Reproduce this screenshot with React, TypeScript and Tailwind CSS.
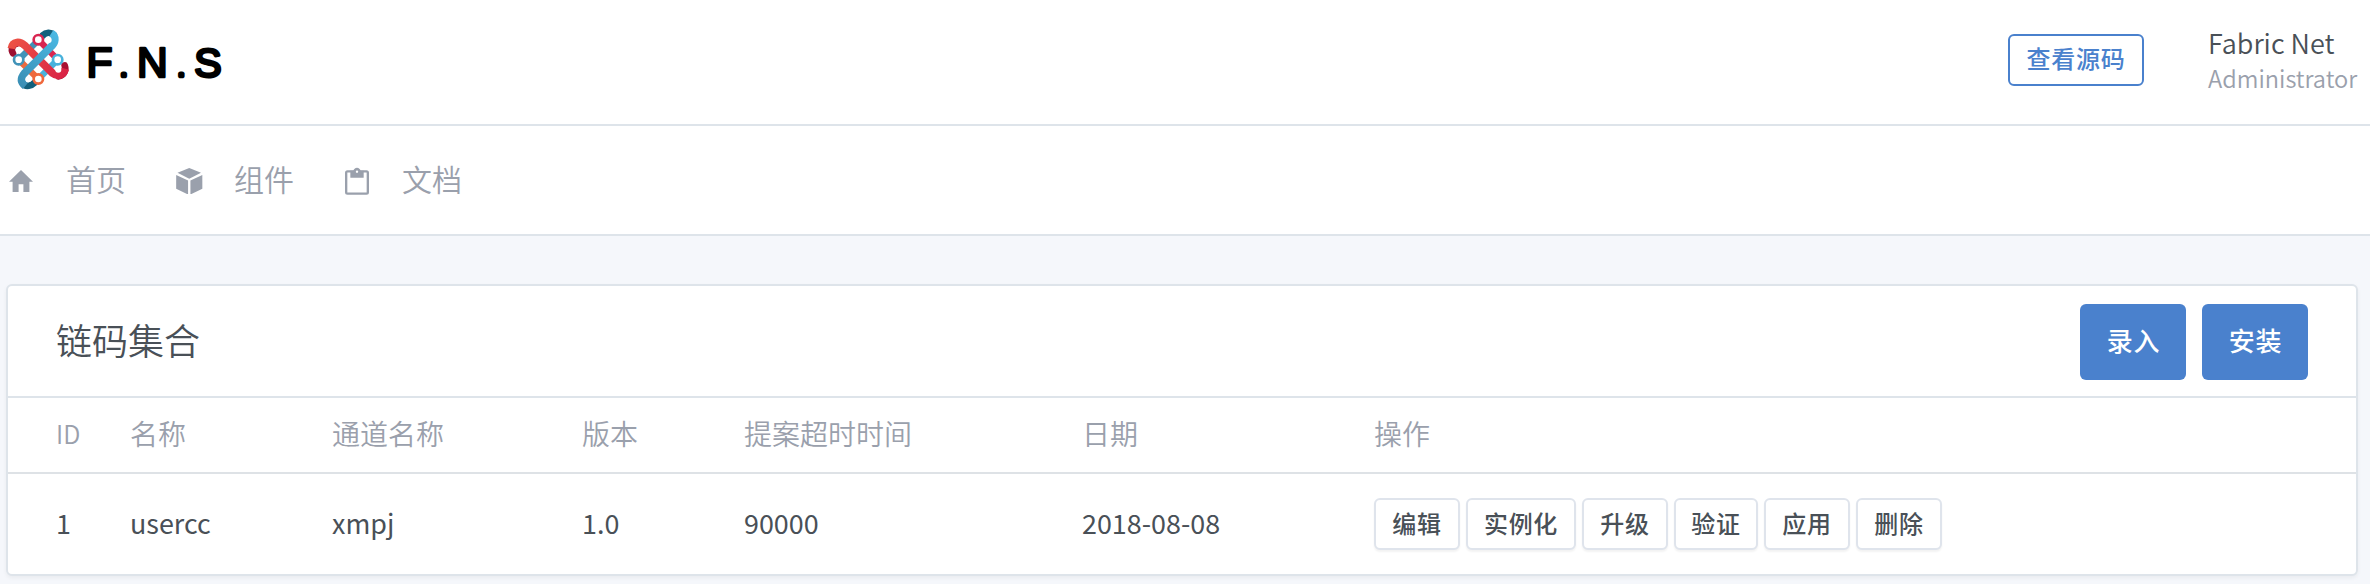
import React from "react";

function Logo() {
  return (
    <svg width="232" height="76" viewBox="0 0 232 76" className="block">
      <defs>
        <linearGradient id="blue" gradientUnits="userSpaceOnUse" x1="55" y1="180" x2="150" y2="20">
          <stop offset="0" stopColor="#3a8fb5" />
          <stop offset="1" stopColor="#4ab8e3" />
        </linearGradient>
        <linearGradient id="red" gradientUnits="userSpaceOnUse" x1="25" y1="50" x2="185" y2="150">
          <stop offset="0" stopColor="#ec5045" />
          <stop offset="1" stopColor="#d92245" />
        </linearGradient>
      </defs>
      <g transform="translate(4 3) scale(0.3333)">
        <g fill="none" strokeWidth="19" strokeLinecap="round">
          <path d="M44 101 L118 28" stroke="#4193b8" />
          <path d="M103 41 L161 101" stroke="#d92550" />
          <path d="M44 101 L103 159" stroke="#ee6a3e" />
          <path d="M103 159 L161 101" stroke="#49b2dc" />
        </g>
        <g fill="none" strokeWidth="20" strokeLinecap="round">
          <path d="M27 82 C20 70 24 58 40 52" stroke="#9c1030" />
          <path d="M182 118 C187 132 182 146 164 151" stroke="#a81032" />
          <path d="M116 28 C126 18 140 18 149 26" stroke="#12607c" />
          <path d="M58 174 C66 184 82 180 92 170" stroke="#12607c" />
        </g>
        <g fill="none" strokeWidth="23">
          <path d="M22 68 C26 44 48 46 62 58 L146 142 C160 153 178 150 184 128" stroke="url(#red)" />
          <path d="M142 22 C158 32 154 50 142 61 L61 142 C48 158 52 170 64 180" stroke="url(#blue)" />
        </g>
        <g fill="#fff" strokeWidth="8">
          <circle cx="103" cy="41" r="14" stroke="#d92550" />
          <circle cx="44" cy="101" r="14" stroke="#4193b8" />
          <circle cx="161" cy="101" r="14" stroke="#49b2dc" />
          <circle cx="103" cy="159" r="14" stroke="#f0683c" />
        </g>
        <g fill="#fff">
          <circle cx="44" cy="71" r="9" />
          <circle cx="134" cy="42" r="9" />
          <circle cx="163" cy="131" r="9" />
          <circle cx="73" cy="160" r="9" />
        </g>
      </g>
      <g fill="#000" stroke="#000" strokeLinejoin="round" className="font-['Liberation_Sans',sans-serif]">
        <text y="54.200" x="86.400" fontSize="42.500" strokeWidth="2.700">F</text>
        <text y="53.400" x="120.900" fontSize="20" strokeWidth="4.700">.</text>
        <text y="54.200" x="136.900" fontSize="42.500" strokeWidth="2.700">N</text>
        <text y="53.400" x="178.500" fontSize="20" strokeWidth="4.700">.</text>
        <text y="54.200" x="194.300" fontSize="41" strokeWidth="2.900">S</text>
      </g>
    </svg>
  );
}

function HomeIcon() {
  return (
    <svg width="24" height="22" viewBox="2 3 20 17" preserveAspectRatio="none" fill="currentColor">
      <path d="M10 20v-6h4v6h5v-8h3L12 3 2 12h3v8z" />
    </svg>
  );
}

function BoxIcon() {
  return (
    <svg width="26.500" height="26.500" viewBox="30 23 78 79" fill="currentColor" className="-ml-px">
      <path d="M69 23 104 37.500 69 55 34 37.500z" />
      <path d="M30 44 65.500 60v42L30 85z" />
      <path d="M108 44 72.500 60v42L108 85z" />
    </svg>
  );
}

function ClipboardIcon() {
  return (
    <svg width="24" height="28" viewBox="27 20 72 84" fill="none" stroke="currentColor">
      <rect x="30.500" y="33" width="65" height="67" rx="4" strokeWidth="7" />
      <path d="M43 31h9c2-5 5-9 11-9s9 4 11 9h9v21H43z" fill="currentColor" stroke="none" />
      <circle cx="63" cy="34" r="3.500" fill="#fff" stroke="none" />
    </svg>
  );
}

const navItems = [
  { label: "首页", icon: <HomeIcon /> },
  { label: "组件", icon: <BoxIcon /> },
  { label: "文档", icon: <ClipboardIcon /> },
];

const columns = [
  { label: "ID", width: "w-[122px]" },
  { label: "名称", width: "w-[202px]" },
  { label: "通道名称", width: "w-[250px]" },
  { label: "版本", width: "w-[162px]" },
  { label: "提案超时时间", width: "w-[338px]" },
  { label: "日期", width: "w-[292px]" },
  { label: "操作", width: "" },
];

const row = ["1", "usercc", "xmpj", "1.0", "90000", "2018-08-08"];

const actions = [
  { label: "编辑", width: "w-[86px]" },
  { label: "实例化", width: "w-[110px]" },
  { label: "升级", width: "w-[86px]" },
  { label: "验证", width: "w-[84px]" },
  { label: "应用", width: "w-[86px]" },
  { label: "删除", width: "w-[86px]" },
];

export default function App() {
  return (
    <div className="h-[584px] w-[2370px] overflow-hidden bg-[#f5f7fb] font-['Noto_Sans_CJK_SC',sans-serif] text-[#495057]">
      <header className="flex h-[126px] items-start justify-between border-b-2 border-[#dee4ea] bg-white">
        <div className="pt-[23px]">
          <Logo />
        </div>
        <div className="flex">
          <button className="mt-[34px] flex h-[52px] w-[136px] items-center justify-center rounded-md border-2 border-[#4a81cd] pb-1 text-[24px] leading-none font-medium tracking-[0.03em] text-[#4a81cd]">
            查看源码
          </button>
          <div className="ml-[64px] flex w-[162px] flex-col pt-[25px] whitespace-nowrap">
            <span className="text-[27px] leading-9 font-[350]">Fabric Net</span>
            <span className="text-[23.600px] leading-[34px] font-[350] text-[#9aa0ac]">Administrator</span>
          </div>
        </div>
      </header>

      <nav className="flex h-[110px] items-center border-b-2 border-[#dee4ea] bg-white pl-[9px] text-[#9aa0ac]">
        {navItems.map((item) => (
          <a key={item.label} className="flex w-[168px] items-center">
            <span className="mt-0.5 flex w-[57px]">{item.icon}</span>
            <span className="pb-[5px] text-[30px] leading-none font-[350]">{item.label}</span>
          </a>
        ))}
      </nav>

      <main className="px-1.5 pt-12">
        <section className="h-[292px] w-[2352px] rounded-md border-2 border-[#dee4ea] bg-white shadow-[0_2px_4px_rgba(0,0,0,0.05)]">
          <div className="flex h-[112px] items-center justify-between border-b-2 border-[#dee4ea] pr-12 pl-12">
            <h3 className="pb-[5px] text-[36px] leading-none font-[350]">链码集合</h3>
            <div className="flex gap-4 pt-0.5">
              {["录入", "安装"].map((label) => (
                <button
                  key={label}
                  className="flex h-[76px] w-[106px] items-center justify-center rounded-md bg-[#4a81cd] pb-1 pl-px text-[26px] leading-none font-medium tracking-[0.03em] text-white"
                >
                  {label}
                </button>
              ))}
            </div>
          </div>
          <table className="w-full table-fixed border-separate border-spacing-0 text-left">
            <thead>
              <tr className="h-[76px] text-[28px] leading-9 text-[#9aa0ac]">
                {columns.map((column, i) => (
                  <th
                    key={column.label}
                    className={`${column.width} border-b-2 border-[#dee2e6] p-0 font-[350] ${i === 0 ? "pb-1 pl-12 text-[25px]" : "pb-[5px]"}`}
                  >
                    {column.label}
                  </th>
                ))}
              </tr>
            </thead>
            <tbody>
              <tr className="h-[100px] text-[26.900px]">
                {row.map((value, i) => (
                  <td key={value} className={i === 0 ? "p-0 pb-0.5 pl-12" : "p-0 pb-0.5"}>
                    {value}
                  </td>
                ))}
                <td className="p-0">
                  <div className="flex gap-1.5">
                    {actions.map((action) => (
                      <button
                        key={action.label}
                        className={`${action.width} flex h-[52px] items-center justify-center rounded-md border-2 border-[#dfe4ec] bg-white pb-[3px] text-[24px] leading-none font-medium tracking-[0.03em] shadow-[0_2px_2px_rgba(0,0,0,0.05)]`}
                      >
                        {action.label}
                      </button>
                    ))}
                  </div>
                </td>
              </tr>
            </tbody>
          </table>
        </section>
      </main>
    </div>
  );
}
